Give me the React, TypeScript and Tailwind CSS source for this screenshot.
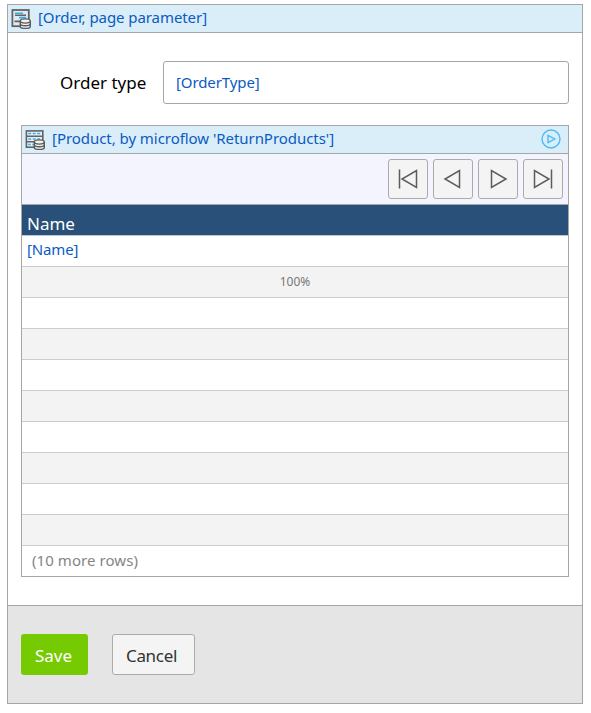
import type { ReactNode } from "react";

function Database() {
  return (
    <g fill="#f1f1f1" stroke="#5a5a5a" strokeWidth="1.4">
      <path d="M9.3 12v5.4c0 1.2 2.2 2 5 2s5-.8 5-2V12" />
      <path d="M9.3 14.8c0 1.2 2.2 2 5 2s5-.8 5-2" fill="none" />
      <ellipse cx="14.3" cy="12" rx="5" ry="2.1" />
    </g>
  );
}

function DataViewIcon() {
  return (
    <svg width="20" height="20" viewBox="0 0 20 20" fill="none" className="shrink-0">
      <rect x="1.4" y="1" width="16.4" height="16.2" fill="#ddebf3" stroke="#626262" strokeWidth="1.8" />
      <path d="M4 4.2h8M8 8.6h7" stroke="#41a9e8" strokeWidth="1.6" />
      <path d="M4 6.2h11M3.5 12.4h5.5" stroke="#626262" strokeWidth="1.6" />
      <Database />
    </svg>
  );
}

function DataGridIcon() {
  return (
    <svg width="20" height="20" viewBox="0 0 20 20" fill="none" className="shrink-0">
      <rect x="1.4" y="0.9" width="16.4" height="16.3" fill="#e5f2f8" stroke="#626262" strokeWidth="1.6" />
      <path d="M1 6.2h16.5M1 11.7h9" stroke="#626262" strokeWidth="1.5" />
      <path d="M3.2 3.6h3m1.5 0h3m1.5 0h3M3.2 9h3m1.5 0h3m1.5 0h3M3.2 14.5h2.5m1.5 0h1.5" stroke="#41a9e8" strokeWidth="1.5" />
      <Database />
    </svg>
  );
}

function NavButton({ path }: { path: string }) {
  return (
    <button className="flex size-10 items-center justify-center rounded-[3px] border border-[#ababab] bg-[#f4f4f4]">
      <svg width="38" height="38" viewBox="0 0 38 38" fill="none" stroke="#5c5c5c" strokeWidth="1.5">
        <path d={path} />
      </svg>
    </button>
  );
}

function SourceBar({ children }: { children: ReactNode }) {
  return <div className="flex h-7 items-center border-b border-[#a6a6a6] bg-[#daeef9] pl-[3px] text-[#0b5ac2]">{children}</div>;
}

const emptyRows = [0, 1, 2, 3, 4, 5, 6, 7];

export default function App() {
  return (
    <div className="h-[713px] w-[591px] bg-white pt-1 pl-[7px] font-['Noto_Sans',sans-serif] whitespace-nowrap">
      <div className="flex h-[700px] w-[576px] flex-col border border-[#a6a6a6]">
        <SourceBar>
          <DataViewIcon />
          <span className="ml-[7px] pb-1 text-[15px] leading-5 tracking-[-0.07px]">[Order, page parameter]</span>
        </SourceBar>
        <div className="flex flex-1 flex-col px-[13px] pt-7">
          <div className="flex h-[43px] items-center">
            <label className="w-[142px] pl-[39px] text-[17px] text-black">Order type</label>
            <div className="flex h-full flex-1 items-center rounded-[3px] border border-[#a6a6a6] pl-3 text-[15px] tracking-[-0.1px] text-[#0b5ac2]">
              [OrderType]
            </div>
          </div>
          <div className="mt-[21px] flex h-[452px] flex-col border border-[#a6a6a6]">
            <SourceBar>
              <DataGridIcon />
              <span className="ml-[7px] pb-[3px] text-[15px] leading-5 tracking-[-0.05px]">[Product, by microflow 'ReturnProducts']</span>
              <svg width="20" height="20" viewBox="0 0 20 20" fill="none" stroke="#4dbaf6" strokeWidth="1.4" className="relative -top-px mr-[7px] ml-auto">
                <circle cx="10" cy="10" r="9" />
                <path d="M7 6.5v7l6.8-3.5z" />
              </svg>
            </SourceBar>
            <div className="flex h-[51px] justify-end gap-[5px] border-b border-[#a6a6a6] bg-[#f4f4ff] pt-[5px] pr-[5px]">
              <NavButton path="M10.5 9.5v19M27.5 10.5v17l-14.5-8.5z" />
              <NavButton path="M25.5 10.5v17l-14.5-8.5z" />
              <NavButton path="M12.5 10.5v17l14.5-8.5z" />
              <NavButton path="M10.5 10.5v17l14.5-8.5zM27.5 9.5v19" />
            </div>
            <div className="flex h-[31px] items-end border-b border-[#bfc8d0] bg-[#285078] pl-[5px] text-[17px] leading-[23px] text-white">Name</div>
            <div className="h-[31px] border-b border-[#cdcdcd] pl-[5px] text-[15px] leading-[27px] tracking-[-0.15px] text-[#0b5ac2]">[Name]</div>
            <div className="h-[31px] border-b border-[#cdcdcd] bg-[#f3f3f3] text-center text-[12px] leading-[30px] text-[#777]">100%</div>
            {emptyRows.map((row) => (
              <div key={row} className={`h-[31px] border-b border-[#cdcdcd] ${row % 2 ? "bg-[#f3f3f3]" : "bg-white"}`} />
            ))}
            <div className="pl-[10px] text-[15px] leading-[29px] tracking-[0.07px] text-[#858585]">(10 more rows)</div>
          </div>
        </div>
        <div className="flex h-[98px] gap-6 border-t border-[#a6a6a6] bg-[#e5e5e5] pt-7 pl-[13px] text-[17px]">
          <button className="h-[41px] w-[67px] rounded-[3px] bg-[#76ca02] pt-[3px] pr-[2px] text-white">Save</button>
          <button className="h-[41px] w-[83px] rounded-[3px] border border-[#ababab] bg-[#f4f4f4] pt-[3px] pr-[4px] tracking-[-0.3px] text-[#333]">Cancel</button>
        </div>
      </div>
    </div>
  );
}
